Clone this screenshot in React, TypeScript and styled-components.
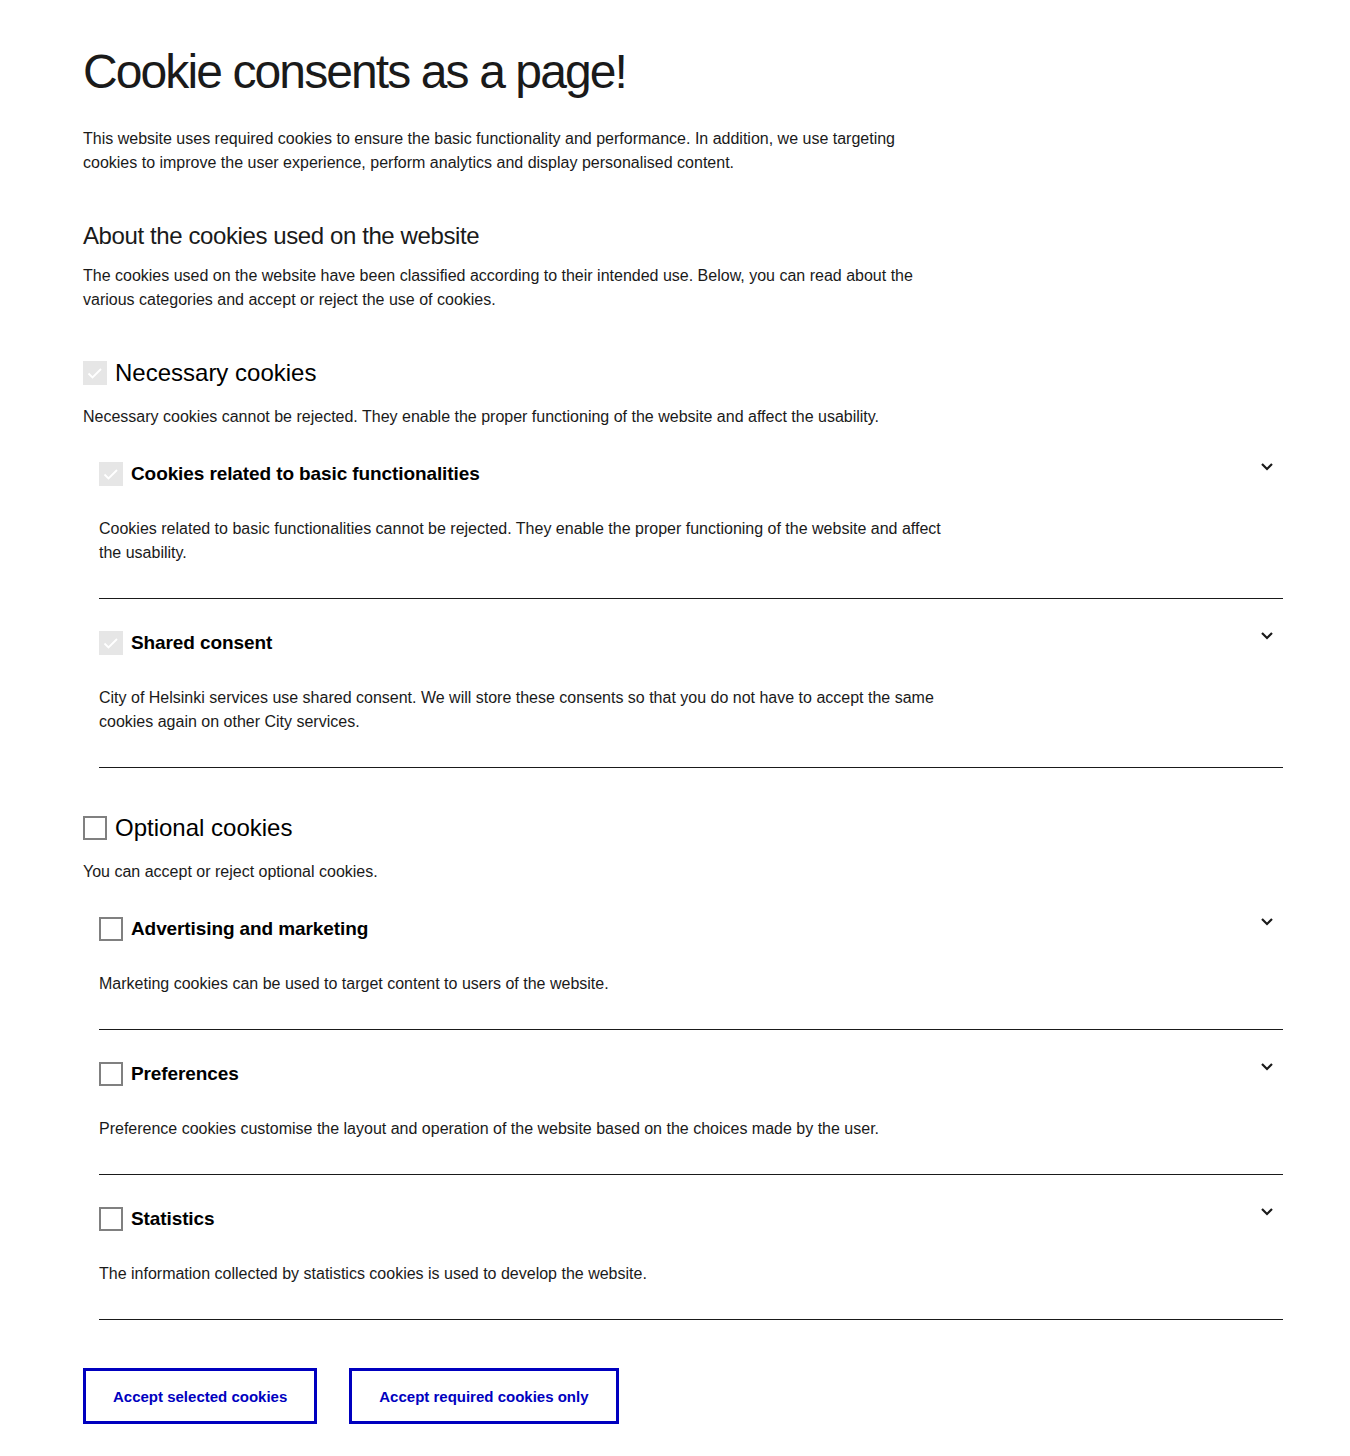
import styled, { createGlobalStyle } from 'styled-components';

const GlobalStyle = createGlobalStyle`
  * { box-sizing: border-box; }
  body {
    margin: 0;
    background: #fff;
    color: #1a1a1a;
    font-family: "Liberation Sans", Arial, sans-serif;
  }
`;

const Page = styled.main`
  padding: 40px 67px 32px 83px;
`;

const Title = styled.h1`
  margin: 0 0 23px;
  font-size: 48px;
  line-height: 64px;
  font-weight: 400;
  letter-spacing: -1.9px;
  color: #1a1a1a;
`;

const Text = styled.p<{ $mb?: number }>`
  margin: 0 0 ${(p) => p.$mb ?? 0}px;
  max-width: 850px;
  font-size: 16px;
  line-height: 24px;
  color: #1a1a1a;
`;

const H2 = styled.h2`
  margin: 0 0 12px;
  font-size: 24px;
  line-height: 32px;
  font-weight: 400;
  letter-spacing: -0.4px;
  color: #1a1a1a;
`;

const Section = styled.section`
  margin-bottom: 49px;
`;

const Group = styled.section`
  margin-bottom: 48px;
`;

const GroupHeader = styled.label`
  display: flex;
  align-items: center;
  gap: 8px;
  margin-bottom: 20px;
  font-size: 24px;
  line-height: 24px;
  font-weight: 500;
  color: #000;
`;

const Box = styled.span<{ $checked?: boolean }>`
  flex: 0 0 24px;
  width: 24px;
  height: 24px;
  display: flex;
  align-items: center;
  justify-content: center;
  background: ${(p) => (p.$checked ? '#e6e6e6' : '#fff')};
  border: ${(p) => (p.$checked ? 'none' : '2px solid #808080')};
`;

const Items = styled.div`
  margin-left: 16px;
  margin-top: 33px;
`;

const Item = styled.div`
  padding: 32px 0 33px;
  border-bottom: 1px solid #1a1a1a;
  &:first-child { padding-top: 0; }
`;

const ItemHeader = styled.div`
  display: flex;
  align-items: center;
  justify-content: space-between;
  margin-bottom: 31px;
`;

const ItemLabel = styled.label`
  display: flex;
  align-items: center;
  gap: 8px;
  font-size: 19px;
  line-height: 24px;
  font-weight: 700;
  letter-spacing: -0.1px;
  color: #000;
`;

const Toggle = styled.button`
  border: none;
  background: none;
  padding: 0;
  width: 32px;
  height: 24px;
  display: flex;
  justify-content: center;
  align-items: flex-start;
  color: #1a1a1a;
  cursor: pointer;
`;

const Buttons = styled.div`
  display: flex;
  gap: 32px;
`;

const Button = styled.button`
  height: 56px;
  padding: 0 27px;
  background: #fff;
  border: 3px solid #0000bf;
  color: #0000bf;
  font-family: "Liberation Sans", Arial, sans-serif;
  font-size: 15px;
  font-weight: 700;
  cursor: pointer;
`;

const Check = () => (
  <svg width="24" height="24" viewBox="0 0 24 24" fill="none">
    <path d="M5.5 12.5l4 4 8.5-8.5" stroke="#fff" strokeWidth="1.8" />
  </svg>
);

const Chevron = () => (
  <svg width="14" height="10" viewBox="0 0 14 10" fill="none">
    <path d="M2 2l5 5 5-5" stroke="#1a1a1a" strokeWidth="2.2" />
  </svg>
);

type Cookie = { title: string; text: string; checked?: boolean };

const necessary: Cookie[] = [
  {
    title: 'Cookies related to basic functionalities',
    text: 'Cookies related to basic functionalities cannot be rejected. They enable the proper functioning of the website and affect the usability.',
    checked: true,
  },
  {
    title: 'Shared consent',
    text: 'City of Helsinki services use shared consent. We will store these consents so that you do not have to accept the same cookies again on other City services.',
    checked: true,
  },
];

const optional: Cookie[] = [
  { title: 'Advertising and marketing', text: 'Marketing cookies can be used to target content to users of the website.' },
  { title: 'Preferences', text: 'Preference cookies customise the layout and operation of the website based on the choices made by the user.' },
  { title: 'Statistics', text: 'The information collected by statistics cookies is used to develop the website.' },
];

function CookieGroup(props: { title: string; text: string; checked?: boolean; items: Cookie[] }) {
  return (
    <Group>
      <GroupHeader>
        <Box $checked={props.checked}>{props.checked && <Check />}</Box>
        {props.title}
      </GroupHeader>
      <Text>{props.text}</Text>
      <Items>
        {props.items.map((c) => (
          <Item key={c.title}>
            <ItemHeader>
              <ItemLabel>
                <Box $checked={c.checked}>{c.checked && <Check />}</Box>
                {c.title}
              </ItemLabel>
              <Toggle aria-label="Show details"><Chevron /></Toggle>
            </ItemHeader>
            <Text>{c.text}</Text>
          </Item>
        ))}
      </Items>
    </Group>
  );
}

export default function App() {
  return (
    <Page>
      <GlobalStyle />
      <Title>Cookie consents as a page!</Title>
      <Text $mb={45}>
        This website uses required cookies to ensure the basic functionality and performance. In addition, we use targeting cookies to improve the user experience, perform analytics and display personalised content.
      </Text>
      <Section>
        <H2>About the cookies used on the website</H2>
        <Text>
          The cookies used on the website have been classified according to their intended use. Below, you can read about the various categories and accept or reject the use of cookies.
        </Text>
      </Section>
      <CookieGroup
        title="Necessary cookies"
        text="Necessary cookies cannot be rejected. They enable the proper functioning of the website and affect the usability."
        checked
        items={necessary}
      />
      <CookieGroup
        title="Optional cookies"
        text="You can accept or reject optional cookies."
        items={optional}
      />
      <Buttons>
        <Button>Accept selected cookies</Button>
        <Button>Accept required cookies only</Button>
      </Buttons>
    </Page>
  );
}
